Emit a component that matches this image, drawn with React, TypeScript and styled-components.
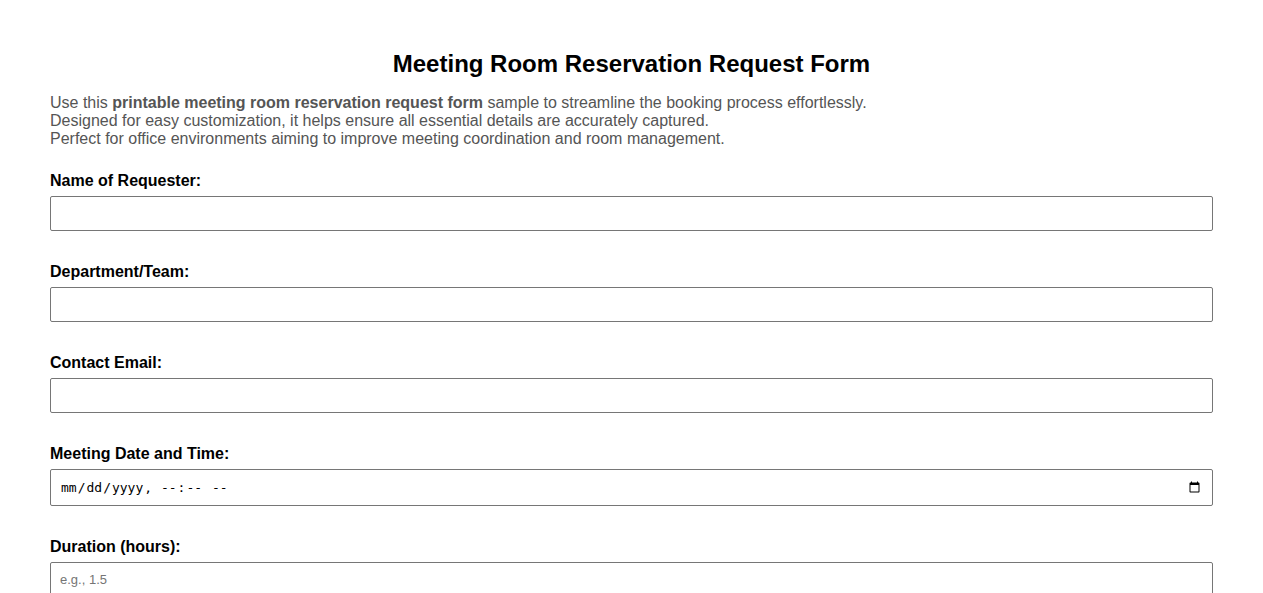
import React from "react";
import styled, { createGlobalStyle } from "styled-components";

const Global = createGlobalStyle`
  html, body { margin: 0; padding: 0; background: #ffffff; }
  body { font-family: "Liberation Sans", Arial, sans-serif; color: #000; }
`;

const Page = styled.div`
  padding: 40px 50px 40px 50px;
`;

const Title = styled.h1`
  margin: 0 0 6px 0;
  text-align: center;
  font-size: 24px;
  font-weight: bold;
  line-height: 48px;
  color: #000;
`;

const Intro = styled.p`
  margin: 0 0 24px 0;
  font-size: 16px;
  line-height: 18px;
  color: #555;
  strong { font-weight: bold; }
`;

const Field = styled.div`
  display: flex;
  flex-direction: column;
  margin-bottom: 32px;
`;

const Label = styled.label`
  font-size: 16px;
  font-weight: bold;
  line-height: 18px;
  margin-bottom: 6px;
  color: #000;
`;

const Input = styled.input`
  box-sizing: border-box;
  width: 100%;
  height: ${(p) => (p.type === "datetime-local" ? "37px" : "35px")};
  padding: 0 9px;
  border: 1px solid #767676;
  border-radius: 2px;
  font-size: 13px;
  font-family: ${(p) => (p.type === "datetime-local" ? "monospace" : "\"Liberation Sans\", Arial, sans-serif")};
  background: #fff;
  color: #000;
  &::placeholder { color: #757575; }
`;

export default function App() {
  return (
    <>
      <Global />
      <Page>
        <Title>Meeting Room Reservation Request Form</Title>
        <Intro>
          Use this <strong>printable meeting room reservation request form</strong> sample to streamline the booking process effortlessly.
          <br />
          Designed for easy customization, it helps ensure all essential details are accurately captured.
          <br />
          Perfect for office environments aiming to improve meeting coordination and room management.
        </Intro>
        <Field>
          <Label>Name of Requester:</Label>
          <Input type="text" />
        </Field>
        <Field>
          <Label>Department/Team:</Label>
          <Input type="text" />
        </Field>
        <Field>
          <Label>Contact Email:</Label>
          <Input type="email" />
        </Field>
        <Field>
          <Label>Meeting Date and Time:</Label>
          <Input type="datetime-local" />
        </Field>
        <Field>
          <Label>Duration (hours):</Label>
          <Input type="text" placeholder="e.g., 1.5" />
        </Field>
      </Page>
    </>
  );
}
